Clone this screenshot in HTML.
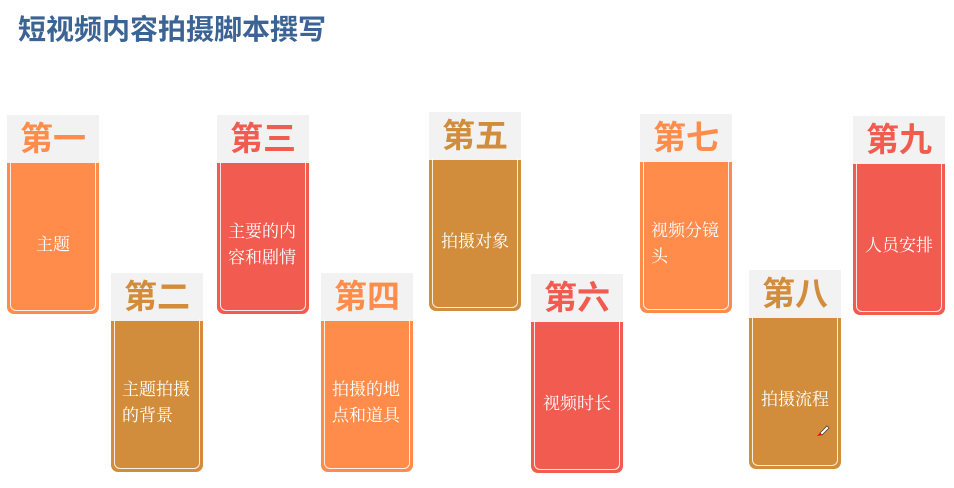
<!DOCTYPE html>
<html><head><meta charset="utf-8"><style>
body{margin:0;width:954px;height:488px;background:#fff;position:relative;overflow:hidden;font-family:"Liberation Sans","Noto Sans CJK SC",sans-serif}
h1{position:absolute;left:18px;top:8px;margin:0;font-size:28px;font-weight:bold;color:#3B6394;letter-spacing:0px}
.c{position:absolute;width:92px}
.h{height:48px;background:#f2f2f2;text-align:center;font-size:33px;font-weight:bold;line-height:48px}
.b{height:151px;border-radius:0 0 7px 7px;position:relative;display:flex;align-items:center;justify-content:center;box-sizing:border-box;padding-top:12px}
.b:after{content:"";position:absolute;left:3px;right:3px;top:-2px;bottom:3px;border:1.5px solid rgba(255,255,255,.85);border-top:none;border-radius:0 0 6px 6px}
.t{width:70px;color:#fff;font-family:"Liberation Serif","Noto Serif CJK SC",serif;font-size:17px;line-height:26px;text-align:left}
.t.s{text-align:center;width:auto}
.o .h{color:#FF8C4B}.o .b{background:#FF8C4B}
.r .h{color:#F25B50}.r .b{background:#F25B50}
.y .h{color:#D18D3C}.y .b{background:#D18D3C}
</style></head><body>
<h1>短视频内容拍摄脚本撰写</h1>
<div class="c o" style="left:7px;top:115px"><div class="h">第一</div><div class="b"><div class="t s">主题</div></div></div>
<div class="c y" style="left:111px;top:273px"><div class="h">第二</div><div class="b"><div class="t">主题拍摄的背景</div></div></div>
<div class="c r" style="left:217px;top:115px"><div class="h">第三</div><div class="b"><div class="t">主要的内容和剧情</div></div></div>
<div class="c o" style="left:321px;top:273px"><div class="h">第四</div><div class="b"><div class="t">拍摄的地点和道具</div></div></div>
<div class="c y" style="left:429px;top:112px"><div class="h">第五</div><div class="b"><div class="t s">拍摄对象</div></div></div>
<div class="c r" style="left:531px;top:274px"><div class="h">第六</div><div class="b"><div class="t s">视频时长</div></div></div>
<div class="c o" style="left:640px;top:114px"><div class="h">第七</div><div class="b"><div class="t">视频分镜头</div></div></div>
<div class="c y" style="left:749px;top:270px"><div class="h">第八</div><div class="b"><div class="t s">拍摄流程</div></div></div>
<div class="c r" style="left:853px;top:116px"><div class="h">第九</div><div class="b"><div class="t s">人员安排</div></div></div>
<svg style="position:absolute;left:816px;top:423px" width="14" height="14" viewBox="0 0 14 14"><path d="M4 10 L11 3 L13 5 L6 12 Z" fill="#fff" stroke="#444" stroke-width="0.8"/><path d="M1 13 L4 10 L6 12 Z" fill="#e00"/></svg>
</body></html>
